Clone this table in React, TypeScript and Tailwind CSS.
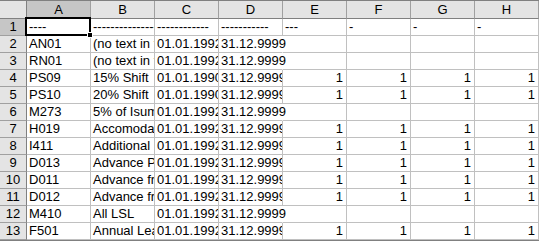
import React from "react";

type Row = { n: number; cells: string[] };

const cols = ["A", "B", "C", "D", "E", "F", "G", "H"];

const rows: Row[] = [
  { n: 1, cells: ["----", "-----------------------", "------------", "-----------", "---", "-", "-", "-"] },
  { n: 2, cells: ["AN01", "(no text in table)", "01.01.1992", "31.12.9999", "", "", "", ""] },
  { n: 3, cells: ["RN01", "(no text in table)", "01.01.1992", "31.12.9999", "", "", "", ""] },
  { n: 4, cells: ["PS09", "15% Shift", "01.01.1990", "31.12.9999", "1", "1", "1", "1"] },
  { n: 5, cells: ["PS10", "20% Shift", "01.01.1990", "31.12.9999", "1", "1", "1", "1"] },
  { n: 6, cells: ["M273", "5% of Isum", "01.01.1992", "31.12.9999", "", "", "", ""] },
  { n: 7, cells: ["H019", "Accomodation", "01.01.1992", "31.12.9999", "1", "1", "1", "1"] },
  { n: 8, cells: ["I411", "Additional", "01.01.1992", "31.12.9999", "1", "1", "1", "1"] },
  { n: 9, cells: ["D013", "Advance Pay", "01.01.1992", "31.12.9999", "1", "1", "1", "1"] },
  { n: 10, cells: ["D011", "Advance from", "01.01.1992", "31.12.9999", "1", "1", "1", "1"] },
  { n: 11, cells: ["D012", "Advance from", "01.01.1992", "31.12.9999", "1", "1", "1", "1"] },
  { n: 12, cells: ["M410", "All LSL", "01.01.1992", "31.12.9999", "", "", "", ""] },
  { n: 13, cells: ["F501", "Annual Leave", "01.01.1992", "31.12.9999", "1", "1", "1", "1"] },
];

function Cell({ text, next, selected }: { text: string; next: string | undefined; selected?: boolean }) {
  const numeric = /^\d+$/.test(text);
  // text spills into the next cell when that one is empty
  const spill = !numeric && text !== "" && next === "";
  return (
    <div
      className={
        "relative h-[17px] border-b border-r border-b-[#c0c0c0] " +
        (spill ? "z-10 border-r-white " : "border-r-[#c0c0c0] ") +
        (selected ? "z-20" : "")
      }
    >
      <div
        className={
          "flex h-full items-end whitespace-nowrap pb-[1px] leading-[15px] " +
          (spill ? "overflow-visible " : "overflow-hidden ") +
          (numeric ? "justify-end pr-[3px]" : "pl-[2px]")
        }
      >
        {text}
      </div>
      {selected && (
        <div className="absolute -left-[2px] -top-[2px] h-[19px] w-[66px] border-2 border-black">
          <div className="absolute -bottom-[4px] -right-[4px] h-[6px] w-[6px] border border-white bg-black" />
        </div>
      )}
    </div>
  );
}

export default function App() {
  return (
    <div className="h-[241px] w-[539px] overflow-hidden bg-white font-['Liberation_Sans',Arial,sans-serif] text-[13px] text-black">
      <div className="grid grid-cols-[27px_repeat(8,64px)] border-t border-t-[#808080]">
        <div className="h-[18px] border-b border-r border-b-[#808080] border-r-[#808080] bg-[#e4e4e4]" />
        {cols.map((c) => (
          <div
            key={c}
            className={
              "flex h-[18px] items-center justify-center border-b border-r border-b-[#808080] border-r-[#a0a0a0] leading-[15px] " +
              (c === "A" ? "bg-[#c6c6c6]" : "bg-[#e4e4e4]")
            }
          >
            {c}
          </div>
        ))}
        {rows.map((r) => (
          <React.Fragment key={r.n}>
            <div
              className={
                "flex h-[17px] items-end justify-center border-b border-r border-b-[#a0a0a0] border-r-[#808080] pb-[1px] leading-[15px] " +
                (r.n === 1 ? "bg-[#c6c6c6]" : "bg-[#e4e4e4]")
              }
            >
              {r.n}
            </div>
            {r.cells.map((t, i) => (
              <Cell key={i} text={t} next={r.cells[i + 1]} selected={r.n === 1 && i === 0} />
            ))}
          </React.Fragment>
        ))}
      </div>
      <div className="h-[2px] border-t border-t-[#808080] bg-[#d4d0c8]" />
    </div>
  );
}
